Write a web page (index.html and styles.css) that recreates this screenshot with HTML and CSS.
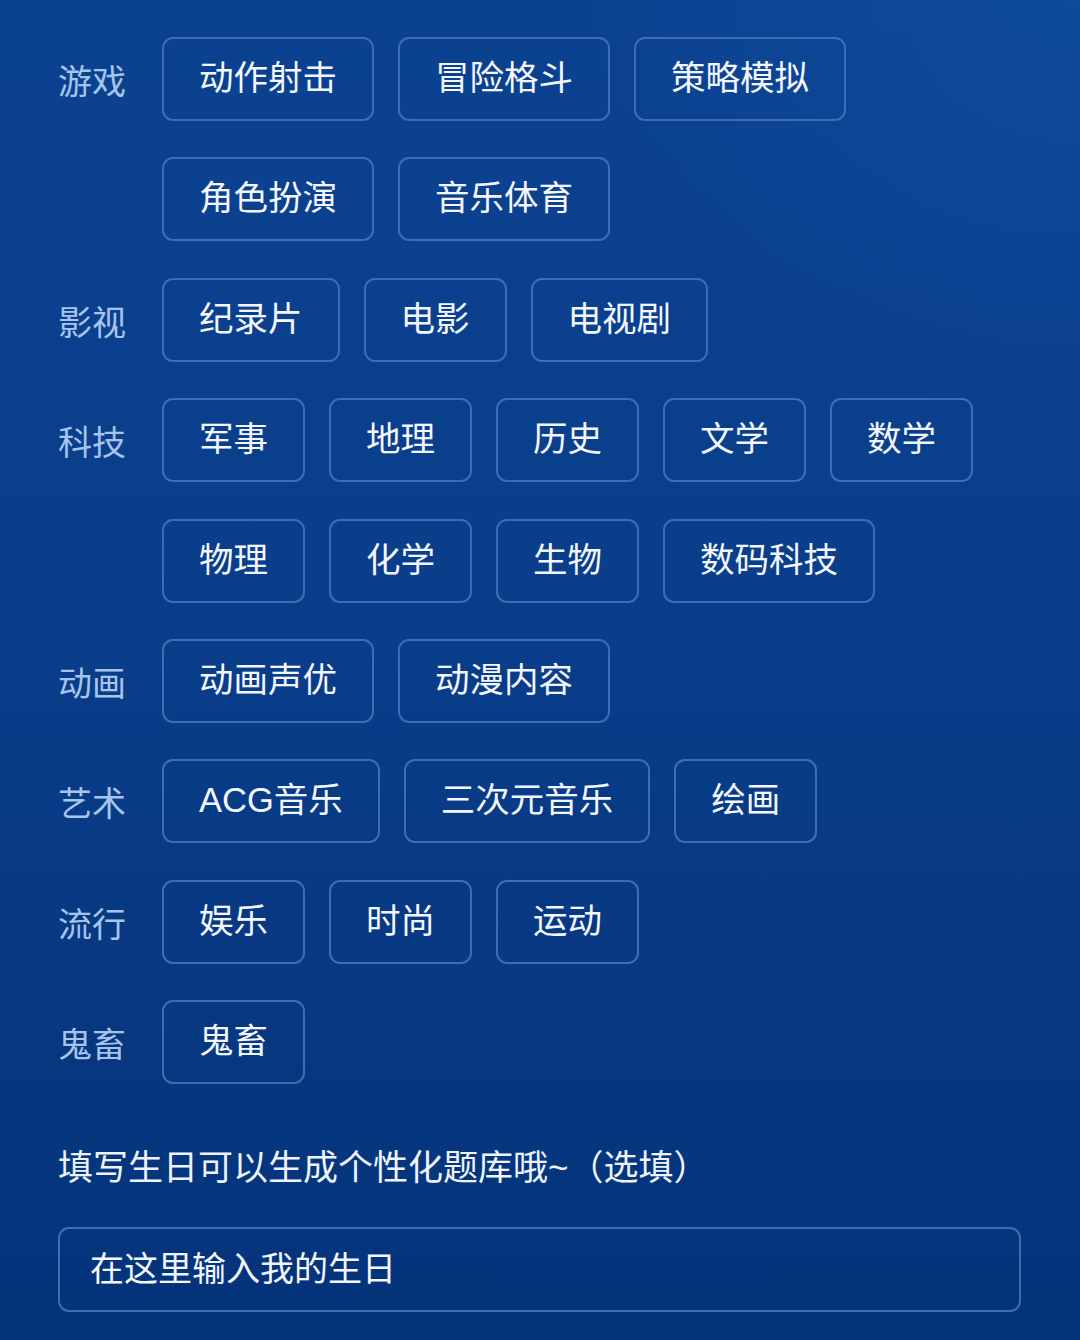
FILE: index.html
```html
<!DOCTYPE html>
<html lang="zh-CN">
<head>
<meta charset="utf-8">
<title>兴趣选择</title>
<link rel="stylesheet" href="styles.css">
</head>
<body>
<main class="page">
  <section class="groups">
    <div class="group">
      <div class="label">游戏</div>
      <div class="chips">
        <span class="chip">动作射击</span>
        <span class="chip">冒险格斗</span>
        <span class="chip">策略模拟</span>
        <span class="chip">角色扮演</span>
        <span class="chip">音乐体育</span>
      </div>
    </div>
    <div class="group">
      <div class="label">影视</div>
      <div class="chips">
        <span class="chip">纪录片</span>
        <span class="chip">电影</span>
        <span class="chip">电视剧</span>
      </div>
    </div>
    <div class="group">
      <div class="label">科技</div>
      <div class="chips">
        <span class="chip">军事</span>
        <span class="chip">地理</span>
        <span class="chip">历史</span>
        <span class="chip">文学</span>
        <span class="chip">数学</span>
        <span class="chip">物理</span>
        <span class="chip">化学</span>
        <span class="chip">生物</span>
        <span class="chip">数码科技</span>
      </div>
    </div>
    <div class="group">
      <div class="label">动画</div>
      <div class="chips">
        <span class="chip">动画声优</span>
        <span class="chip">动漫内容</span>
      </div>
    </div>
    <div class="group">
      <div class="label">艺术</div>
      <div class="chips">
        <span class="chip">ACG音乐</span>
        <span class="chip">三次元音乐</span>
        <span class="chip">绘画</span>
      </div>
    </div>
    <div class="group">
      <div class="label">流行</div>
      <div class="chips">
        <span class="chip">娱乐</span>
        <span class="chip">时尚</span>
        <span class="chip">运动</span>
      </div>
    </div>
    <div class="group">
      <div class="label">鬼畜</div>
      <div class="chips">
        <span class="chip">鬼畜</span>
      </div>
    </div>
  </section>
  <p class="hint">填写生日可以生成个性化题库哦~（选填）</p>
  <div class="birthday">在这里输入我的生日</div>
</main>
</body>
</html>
```

FILE: styles.css
```css
html, body {
  margin: 0;
  padding: 0;
}

body {
  width: 1080px;
  height: 1340px;
  overflow: hidden;
  font-family: "Liberation Sans", "Noto Sans CJK SC", sans-serif;
  color: #f2f6ff;
  background:
    radial-gradient(ellipse 700px 600px at 100% 0%, rgba(20, 90, 180, 0.35), rgba(20, 90, 180, 0) 70%),
    linear-gradient(to bottom, #0b4290 0%, #0a3e8b 45%, #073880 75%, #04337a 100%);
}

.page {
  padding: 37px 59px 0 58px;
  box-sizing: border-box;
}

.groups {
  display: flex;
  flex-direction: column;
  gap: 36.4px;
}

.group {
  display: flex;
  align-items: flex-start;
}

.label {
  box-sizing: border-box;
  width: 104px;
  height: 84px;
  flex: none;
  font-size: 34px;
  line-height: 78px;
  padding-top: 6px;
  color: #a7c4ec;
}

.chips {
  display: flex;
  flex-wrap: wrap;
  column-gap: 24px;
  row-gap: 36.4px;
  width: 840px;
}

.chip {
  box-sizing: border-box;
  height: 84px;
  padding: 0 35px;
  border: 2px solid #3e6eb2;
  border-radius: 11px;
  font-size: 34.5px;
  line-height: 78px;
  color: #f4f7ff;
  white-space: nowrap;
}

.hint {
  margin: 60px 0 0;
  font-size: 35px;
  line-height: 48px;
  color: #eef3fc;
}

.birthday {
  box-sizing: border-box;
  margin-top: 35px;
  width: 963px;
  height: 85px;
  border: 2px solid #3e6eb2;
  border-radius: 11px;
  padding-left: 30px;
  font-size: 34px;
  line-height: 80px;
  color: #f4f7ff;
}
```
